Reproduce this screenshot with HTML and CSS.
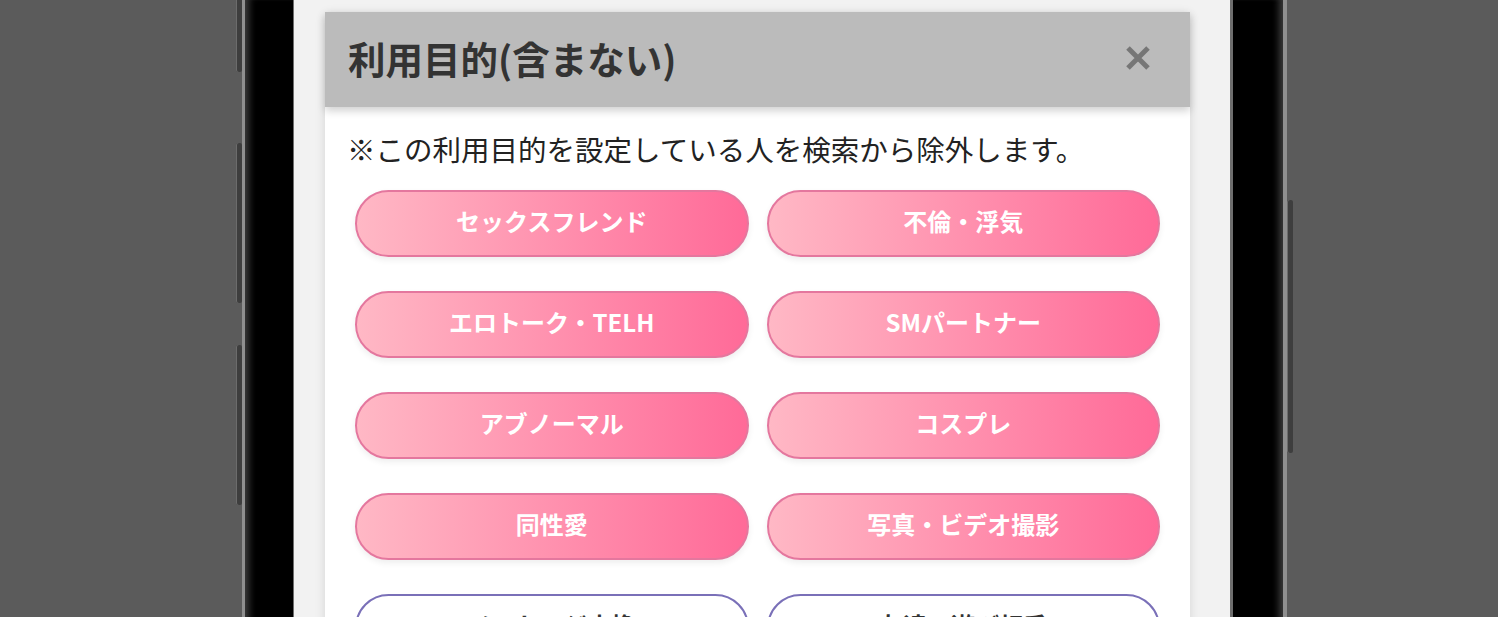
FILE: index.html
```html
<!DOCTYPE html>
<html lang="ja">
<head>
    <meta charset="UTF-8">
    <meta name="viewport" content="width=device-width, initial-scale=1.0">
    <title>利用目的(含まない)</title>
    <link rel="stylesheet" href="styles.css">
</head>
<body>
    <div class="phone">
        <span class="side-btn side-btn-1"></span>
        <span class="side-btn side-btn-2"></span>
        <span class="side-btn side-btn-3"></span>
        <span class="side-btn side-btn-r"></span>

        <div class="screen">
            <div class="modal">
                <div class="modal-header">
                    <h1>利用目的(含まない)</h1>
                    <button class="close-btn" aria-label="閉じる">
                        <svg width="28" height="28" viewBox="0 0 28 28">
                            <path d="M4 4 L24 24 M24 4 L4 24" stroke="#767676" stroke-width="5" stroke-linecap="butt" />
                        </svg>
                    </button>
                </div>

                <div class="modal-body">
                    <p class="note">※この利用目的を設定している人を検索から除外します。</p>

                    <div class="purpose-grid">
                        <button class="purpose active">セックスフレンド</button>
                        <button class="purpose active">不倫・浮気</button>
                        <button class="purpose active">エロトーク・TELH</button>
                        <button class="purpose active">SMパートナー</button>
                        <button class="purpose active">アブノーマル</button>
                        <button class="purpose active">コスプレ</button>
                        <button class="purpose active">同性愛</button>
                        <button class="purpose active">写真・ビデオ撮影</button>
                        <button class="purpose">メッセージ交換</button>
                        <button class="purpose">友達・遊び相手</button>
                    </div>
                </div>
            </div>
        </div>
    </div>
</body>
</html>
```

FILE: styles.css
```css
* {
    margin: 0;
    padding: 0;
    box-sizing: border-box;
}

body {
    background: #5b5b5b;
    height: 617px;
    overflow: hidden;
    font-family: 'Noto Sans CJK JP', 'Noto Sans', sans-serif;
    padding-left: 242px;
}

.phone {
    position: relative;
    width: 1045px;
    height: 700px;
    background: #000;
    border-left: 3px solid #8f8f8f;
    border-right: 4px solid #8f8f8f;
    padding: 0 50px 0 48px;
    box-shadow: inset 9px 0 7px -5px #3c3c3c, inset -9px 0 7px -5px #3c3c3c;
}

.side-btn {
    position: absolute;
    width: 6px;
    background: #3e3e3e;
    border-radius: 2px;
    box-shadow: inset 1px 0 0 #6c6c6c;
}

.side-btn-1 { left: -9px; top: -10px; height: 82px; }
.side-btn-2 { left: -9px; top: 143px; height: 160px; }
.side-btn-3 { left: -9px; top: 345px; height: 160px; }
.side-btn-r { right: -10px; top: 200px; height: 253px; }

.screen {
    height: 100%;
    background: #f2f2f2;
    border-right: 3px solid #6e6e6e;
    border-left: 1px solid #6e6e6e;
    padding: 12px 0 0 31px;
}

.modal {
    width: 865px;
    background: #fff;
    box-shadow: 0 2px 10px rgba(0, 0, 0, 0.12);
}

.modal-header {
    height: 95px;
    background: #bbbbbb;
    display: flex;
    align-items: center;
    justify-content: space-between;
    padding: 0 38px 4px 23px;
    box-shadow: 0 4px 8px rgba(0, 0, 0, 0.18);
    position: relative;
}

.modal-header h1 {
    font-size: 37.5px;
    font-weight: 700;
    color: #333;
}

.close-btn {
    background: none;
    border: none;
    display: flex;
    cursor: pointer;
}

.modal-body {
    padding: 22px 22px 40px;
}

.note {
    font-size: 28.5px;
    line-height: 40px;
    color: #222;
}

.purpose-grid {
    display: grid;
    grid-template-columns: 1fr 1fr;
    column-gap: 18px;
    row-gap: 34px;
    padding: 0 8px;
    margin-top: 21px;
}

.purpose {
    height: 67px;
    border-radius: 34px;
    border: 2px solid #7a70b8;
    background: #fff;
    color: #333;
    font-family: inherit;
    font-size: 24px;
    font-weight: 700;
    padding-bottom: 6px;
    cursor: pointer;
}

.purpose.active {
    border-color: #e4779e;
    background: linear-gradient(to right, #ffb8c5, #ff6a98);
    color: #fff;
    box-shadow: 0 3px 6px rgba(0, 0, 0, 0.07);
}
```
